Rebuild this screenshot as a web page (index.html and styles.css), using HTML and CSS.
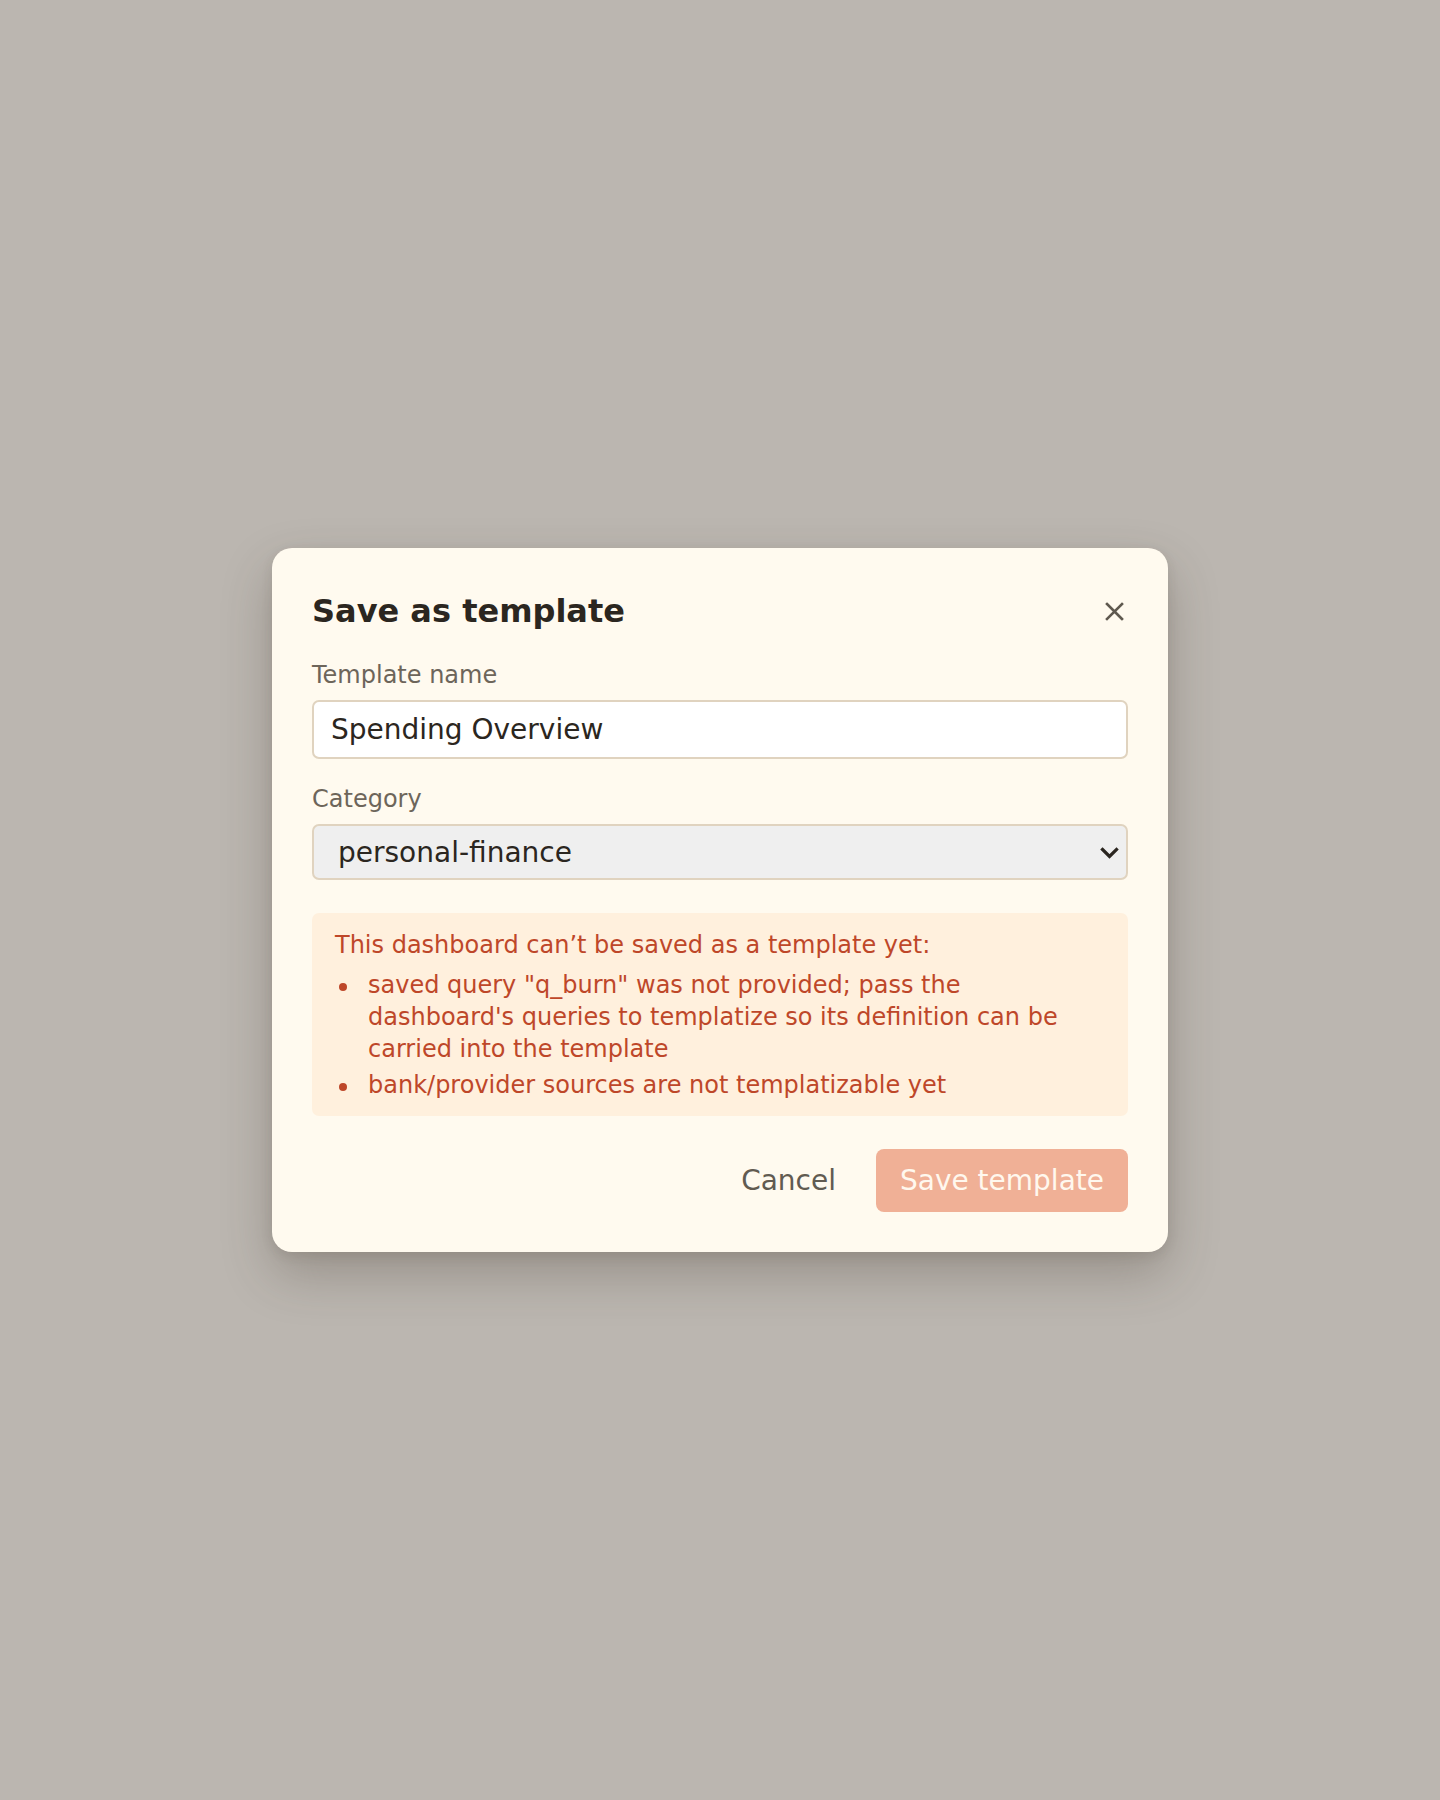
FILE: index.html
```html
<!DOCTYPE html>
<html lang="en">
<head>
<meta charset="utf-8">
<title>Save as template</title>
<link rel="stylesheet" href="styles.css">
</head>
<body>
<div class="backdrop">
  <div class="modal" role="dialog" aria-labelledby="dlg-title">
    <div class="modal-header">
      <h2 id="dlg-title" class="modal-title">Save as template</h2>
      <button class="close-btn" aria-label="Close">
        <svg width="19" height="19" viewBox="0 0 19 19" aria-hidden="true">
          <path d="M2 2 L17 17 M17 2 L2 17" stroke="#5f594f" stroke-width="2.6" stroke-linecap="square" fill="none"/>
        </svg>
      </button>
    </div>
    <div class="field">
      <label class="field-label" for="tpl-name">Template name</label>
      <input id="tpl-name" class="text-input" type="text" value="Spending Overview">
    </div>
    <div class="field">
      <label class="field-label" for="tpl-cat">Category</label>
      <div class="select-wrap">
        <select id="tpl-cat" class="select-input">
          <option selected>personal-finance</option>
        </select>
        <svg class="select-chevron" width="19" height="12" viewBox="0 0 19 12" aria-hidden="true">
          <path d="M2.5 2.5 L9.5 9.5 L16.5 2.5" stroke="#2b2620" stroke-width="3.2" stroke-linecap="square" fill="none"/>
        </svg>
      </div>
    </div>
    <div class="error-box">
      <p class="error-title">This dashboard can’t be saved as a template yet:</p>
      <ul class="error-list">
        <li>saved query "q_burn" was not provided; pass the dashboard's queries to templatize so its definition can be carried into the template</li>
        <li>bank/provider sources are not templatizable yet</li>
      </ul>
    </div>
    <div class="actions">
      <button class="btn-cancel">Cancel</button>
      <button class="btn-save" disabled>Save template</button>
    </div>
  </div>
</div>
</body>
</html>
```

FILE: styles.css
```css
* { box-sizing: border-box; }

html, body {
  margin: 0;
  padding: 0;
}

body {
  background: #bbb6b0;
  font-family: "DejaVu Sans", "Noto Sans", sans-serif;
}

.backdrop {
  min-height: 1800px;
  display: flex;
  align-items: center;
  justify-content: center;
}

.modal {
  width: 896px;
  background: #fffaef;
  border-radius: 20px;
  padding: 40px;
  box-shadow: 0 22px 50px rgba(60, 50, 40, 0.28), 0 4px 12px rgba(60, 50, 40, 0.10);
}

.modal-header {
  display: flex;
  align-items: center;
  justify-content: space-between;
  height: 46px;
  margin-bottom: 26px;
}

.modal-title {
  margin: 0;
  font-size: 32px;
  font-weight: 700;
  color: #2b2620;
  line-height: 46px;
}

.close-btn {
  border: 0;
  background: transparent;
  padding: 0;
  margin-right: 4px;
  width: 19px;
  height: 19px;
  display: flex;
  cursor: pointer;
}

.field {
  display: flex;
  flex-direction: column;
  margin-bottom: 25px;
}

.field-label {
  font-size: 24px;
  line-height: 30px;
  color: #6d655a;
  margin-bottom: 10px;
}

.text-input {
  height: 59px;
  border: 2px solid #e0d3bf;
  border-radius: 7px;
  background: #ffffff;
  font-family: "DejaVu Sans", sans-serif;
  font-size: 28px;
  color: #2b2620;
  padding: 0 17px;
}

.select-wrap {
  position: relative;
  display: flex;
  flex-direction: column;
}

.select-input {
  -webkit-appearance: none;
  appearance: none;
  height: 56px;
  border: 2px solid #e0d3bf;
  border-radius: 7px;
  background-color: #efefef;
  font-family: "DejaVu Sans", sans-serif;
  font-size: 28px;
  color: #2b2620;
  padding: 0 44px 0 24px;
}

.select-chevron {
  position: absolute;
  right: 9px;
  top: 23px;
  pointer-events: none;
}

.error-box {
  margin-top: 33px;
  background: #fff0dd;
  border-radius: 7px;
  padding: 16px 24px 15px 23px;
  color: #be4729;
  font-size: 24px;
  line-height: 32px;
}

.error-title {
  margin: 0 0 8px;
}

.error-list {
  margin: 0;
  padding: 0;
  list-style: none;
}

.error-list li {
  display: flex;
}

.error-list li::before {
  content: "";
  flex: none;
  width: 8px;
  height: 8px;
  border-radius: 50%;
  background: #be4729;
  margin: 14px 21px 0 4px;
}

.error-list li + li {
  margin-top: 4px;
}

.actions {
  margin-top: 33px;
  display: flex;
  justify-content: flex-end;
  align-items: center;
  gap: 40px;
}

.btn-cancel {
  border: 0;
  background: transparent;
  padding: 0;
  font-family: "DejaVu Sans", sans-serif;
  font-size: 28px;
  color: #615b51;
  cursor: pointer;
}

.btn-save {
  height: 63px;
  border: 0;
  border-radius: 8px;
  background: #f0b096;
  color: #fff8ee;
  font-family: "DejaVu Sans", sans-serif;
  font-size: 28px;
  padding: 0;
  width: 252px;
}
```
